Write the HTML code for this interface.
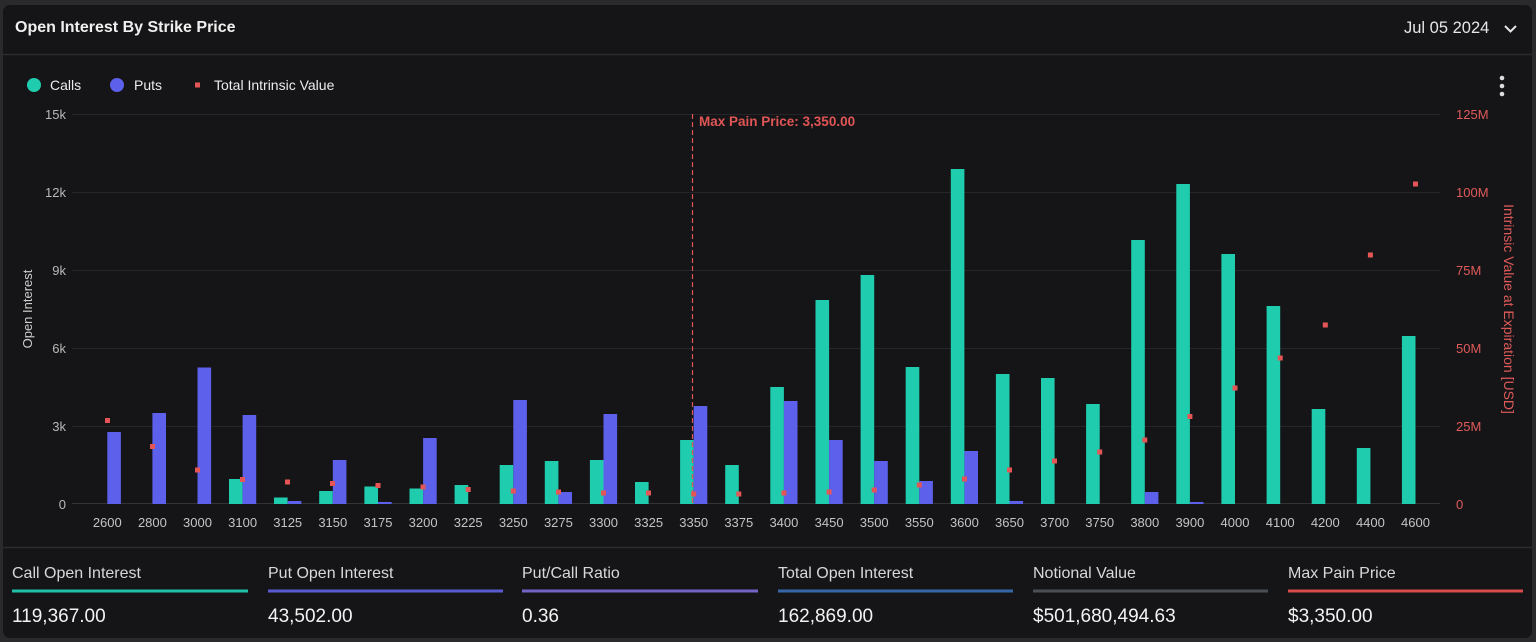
<!DOCTYPE html>
<html><head><meta charset="utf-8"><style>
html,body{margin:0;padding:0;background:#2a2a2d;width:1536px;height:642px;overflow:hidden;font-family:"Liberation Sans",sans-serif}
.card{position:absolute;left:3px;top:5px;width:1529px;height:633px;background:#151517;border-radius:7px}
.t{position:absolute;white-space:nowrap}
</style></head><body>
<div class="card"></div>
<div class="t" style="left:15px;top:19px;font-size:16px;font-weight:bold;color:#f0f0f0">Open Interest By Strike Price</div>
<div class="t" style="left:1404px;top:19px;font-size:16.5px;color:#e6e6e6">Jul 05 2024</div>
<svg style="position:absolute;left:0;top:0" width="1536" height="642">
<line x1="3" y1="54.5" x2="1532" y2="54.5" stroke="#2c2c30" stroke-width="1.5"/>
<line x1="3" y1="547.5" x2="1532" y2="547.5" stroke="#2c2c30" stroke-width="1.5"/>
<polyline points="1505,26 1510.5,31.5 1516,26" fill="none" stroke="#e6e6e6" stroke-width="2"/>
<circle cx="1502" cy="78" r="2.3" fill="#ddd"/><circle cx="1502" cy="86" r="2.3" fill="#ddd"/><circle cx="1502" cy="94" r="2.3" fill="#ddd"/>
<circle cx="34" cy="85" r="7" fill="#1fcdae"/><circle cx="117" cy="85" r="7" fill="#5d60ea"/>
<rect x="195" y="82.5" width="5" height="5" fill="#e55555"/>
<g font-size="14" fill="#ececec"><text x="50" y="90">Calls</text><text x="134" y="90">Puts</text><text x="214" y="90">Total Intrinsic Value</text></g>
<g stroke="#26262a" stroke-width="1">
<line x1="72" y1="114.5" x2="1440" y2="114.5"/><line x1="72" y1="192.5" x2="1440" y2="192.5"/><line x1="72" y1="270.5" x2="1440" y2="270.5"/><line x1="72" y1="348.5" x2="1440" y2="348.5"/><line x1="72" y1="426.5" x2="1440" y2="426.5"/><line x1="72" y1="503.5" x2="1440" y2="503.5" stroke="#333"/>
</g>
<g font-size="13" fill="#b8b8b8" text-anchor="end"><text x="66" y="119">15k</text><text x="66" y="197">12k</text><text x="66" y="275">9k</text><text x="66" y="353">6k</text><text x="66" y="431">3k</text><text x="66" y="509">0</text></g>
<g font-size="13" fill="#e05a5a"><text x="1456" y="119">125M</text><text x="1456" y="197">100M</text><text x="1456" y="275">75M</text><text x="1456" y="353">50M</text><text x="1456" y="431">25M</text><text x="1456" y="509">0</text></g>
<text transform="translate(32,309) rotate(-90)" text-anchor="middle" font-size="13" fill="#cfcfcf">Open Interest</text>
<text transform="translate(1504,309) rotate(90)" text-anchor="middle" font-size="14" fill="#e05a5a">Intrinsic Value at Expiration [USD]</text>
<g fill="#1fcdae">
<rect x="229" y="479" width="13.6" height="25"/><rect x="274" y="497.5" width="13.6" height="6.5"/><rect x="319.2" y="491" width="13.6" height="13"/><rect x="364.4" y="486.5" width="13.6" height="17.5"/><rect x="409.5" y="488.5" width="13.6" height="15.5"/><rect x="454.6" y="485" width="13.6" height="19"/><rect x="499.7" y="465" width="13.6" height="39"/><rect x="544.8" y="461" width="13.6" height="43"/><rect x="589.9" y="460" width="13.6" height="44"/><rect x="635" y="482" width="13.6" height="22"/><rect x="680.1" y="440" width="13.6" height="64"/><rect x="725.2" y="465" width="13.6" height="39"/><rect x="770.3" y="387" width="13.6" height="117"/><rect x="815.5" y="300" width="13.6" height="204"/><rect x="860.6" y="275" width="13.6" height="229"/><rect x="905.7" y="367" width="13.6" height="137"/><rect x="950.8" y="169" width="13.6" height="335"/><rect x="995.9" y="374" width="13.6" height="130"/><rect x="1041" y="378" width="13.6" height="126"/><rect x="1086.1" y="404" width="13.6" height="100"/><rect x="1131.2" y="240" width="13.6" height="264"/><rect x="1176.3" y="184" width="13.6" height="320"/><rect x="1221.4" y="254" width="13.6" height="250"/><rect x="1266.6" y="306" width="13.6" height="198"/><rect x="1311.7" y="409" width="13.6" height="95"/><rect x="1356.8" y="448" width="13.6" height="56"/><rect x="1401.9" y="336" width="13.6" height="168"/>
</g>
<g fill="#5d60ea">
<rect x="107.3" y="432" width="13.6" height="72"/><rect x="152.4" y="413" width="13.6" height="91"/><rect x="197.5" y="367.5" width="13.6" height="136.5"/><rect x="242.6" y="415" width="13.6" height="89"/><rect x="287.7" y="501" width="13.6" height="3"/><rect x="332.8" y="460" width="13.6" height="44"/><rect x="378" y="502" width="13.6" height="2"/><rect x="423.1" y="438" width="13.6" height="66"/><rect x="513.3" y="400" width="13.6" height="104"/><rect x="558.4" y="492" width="13.6" height="12"/><rect x="603.5" y="414" width="13.6" height="90"/><rect x="693.7" y="406" width="13.6" height="98"/><rect x="783.9" y="401" width="13.6" height="103"/><rect x="829.1" y="440" width="13.6" height="64"/><rect x="874.2" y="461" width="13.6" height="43"/><rect x="919.3" y="481" width="13.6" height="23"/><rect x="964.4" y="451" width="13.6" height="53"/><rect x="1009.5" y="501" width="13.6" height="3"/><rect x="1144.8" y="492" width="13.6" height="12"/><rect x="1189.9" y="502" width="13.6" height="2"/>
</g>
<line x1="692.5" y1="114" x2="692.5" y2="504" stroke="#e05555" stroke-width="1.2" stroke-dasharray="5,3"/>
<text x="699" y="126" font-size="13.5" font-weight="bold" fill="#e05555">Max Pain Price: 3,350.00</text>
<g fill="#e55555">
<rect x="105" y="418" width="5" height="5"/><rect x="150" y="444" width="5" height="5"/><rect x="195" y="467.5" width="5" height="5"/><rect x="240" y="477" width="5" height="5"/><rect x="285" y="479.5" width="5" height="5"/><rect x="330" y="481" width="5" height="5"/><rect x="375.5" y="483" width="5" height="5"/><rect x="420.5" y="484.5" width="5" height="5"/><rect x="465.7" y="487" width="5" height="5"/><rect x="510.8" y="488.5" width="5" height="5"/><rect x="556" y="489.5" width="5" height="5"/><rect x="601" y="490.5" width="5" height="5"/><rect x="646" y="490.5" width="5" height="5"/><rect x="691.2" y="491.5" width="5" height="5"/><rect x="736.3" y="491.5" width="5" height="5"/><rect x="781.4" y="490.5" width="5" height="5"/><rect x="826.6" y="489.5" width="5" height="5"/><rect x="871.7" y="487.5" width="5" height="5"/><rect x="916.8" y="482.5" width="5" height="5"/><rect x="962" y="476.5" width="5" height="5"/><rect x="1007" y="467.5" width="5" height="5"/><rect x="1052" y="458.5" width="5" height="5"/><rect x="1097.2" y="449.5" width="5" height="5"/><rect x="1142.3" y="437.5" width="5" height="5"/><rect x="1187.4" y="414" width="5" height="5"/><rect x="1232.5" y="385.5" width="5" height="5"/><rect x="1277.7" y="355.5" width="5" height="5"/><rect x="1322.8" y="322.5" width="5" height="5"/><rect x="1367.9" y="252.5" width="5" height="5"/><rect x="1413" y="181.5" width="5" height="5"/>
</g>
<g font-size="13" fill="#c4c4c4" text-anchor="middle">
<text x="107.3" y="527">2600</text><text x="152.4" y="527">2800</text><text x="197.5" y="527">3000</text><text x="242.6" y="527">3100</text><text x="287.7" y="527">3125</text><text x="332.8" y="527">3150</text><text x="378" y="527">3175</text><text x="423.1" y="527">3200</text><text x="468.2" y="527">3225</text><text x="513.3" y="527">3250</text><text x="558.4" y="527">3275</text><text x="603.5" y="527">3300</text><text x="648.6" y="527">3325</text><text x="693.7" y="527">3350</text><text x="738.8" y="527">3375</text><text x="783.9" y="527">3400</text><text x="829.1" y="527">3450</text><text x="874.2" y="527">3500</text><text x="919.3" y="527">3550</text><text x="964.4" y="527">3600</text><text x="1009.5" y="527">3650</text><text x="1054.6" y="527">3700</text><text x="1099.7" y="527">3750</text><text x="1144.8" y="527">3800</text><text x="1189.9" y="527">3900</text><text x="1235" y="527">4000</text><text x="1280.2" y="527">4100</text><text x="1325.3" y="527">4200</text><text x="1370.4" y="527">4400</text><text x="1415.5" y="527">4600</text>
</g>
<g stroke-width="3">
<line x1="12" y1="591" x2="248" y2="591" stroke="#1fbfa8"/>
<line x1="268" y1="591" x2="503" y2="591" stroke="#5a5ad0"/>
<line x1="522" y1="591" x2="758" y2="591" stroke="#7462c4"/>
<line x1="778" y1="591" x2="1013" y2="591" stroke="#3766a8"/>
<line x1="1033" y1="591" x2="1268" y2="591" stroke="#4a4e55"/>
<line x1="1288" y1="591" x2="1523" y2="591" stroke="#d94c4c"/>
</g>
<g font-size="16" fill="#d8d8d8"><text x="12" y="578">Call Open Interest</text><text x="268" y="578">Put Open Interest</text><text x="522" y="578">Put/Call Ratio</text><text x="778" y="578">Total Open Interest</text><text x="1033" y="578">Notional Value</text><text x="1288" y="578">Max Pain Price</text></g>
<g font-size="19" fill="#f2f2f2"><text x="12" y="622">119,367.00</text><text x="268" y="622">43,502.00</text><text x="522" y="622">0.36</text><text x="778" y="622">162,869.00</text><text x="1033" y="622">$501,680,494.63</text><text x="1288" y="622">$3,350.00</text></g>
</svg>
</body></html>
